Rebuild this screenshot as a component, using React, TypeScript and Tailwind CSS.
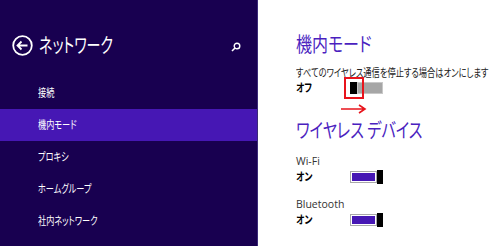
const jp = "font-['Noto_Sans_CJK_JP','Noto_Sans',sans-serif] [font-feature-settings:'palt']"

type ToggleProps = { on: boolean; marked?: boolean }

const Toggle: React.FC<ToggleProps> = ({ on, marked }) => {
  if (on) {
    return (
      <div className="flex h-[14px] w-[33px] items-center">
        <div className="h-[12px] w-[27px] border border-[#a8a8a8] bg-white p-px">
          <div className="h-full w-full bg-[#4617b4]" />
        </div>
        <div className="h-[14px] w-[6px] bg-black" />
      </div>
    )
  }
  return (
    <div className="relative flex h-[12px] w-[33px] items-center">
      <div className="h-[12px] w-[7px] bg-black" />
      <div className="h-[12px] w-[26px] border border-[#c8c8c8] bg-[#a6a6a6]" />
      {marked && (
        <>
          <div className="absolute top-[-5px] left-[-6px] h-[22px] w-[20px] border-2 border-[#e8141c]" />
          <svg
            className="absolute top-[22px] left-[-9px]"
            width="26"
            height="10"
            viewBox="0 0 26 10"
          >
            <path d="M0 5 H24 M18 1 L24 5 L18 9" stroke="#e8141c" strokeWidth="1.6" fill="none" />
          </svg>
        </>
      )}
    </div>
  )
}

type SettingProps = { label: string; state: string; on: boolean; marked?: boolean; jpLabel?: boolean }

const Setting: React.FC<SettingProps> = ({ label, state, on, marked, jpLabel }) => (
  <div className="flex flex-col">
    {jpLabel ? (
      <div
        className={`h-[15px] origin-left scale-x-[0.75] whitespace-nowrap text-[11px] leading-[15px] text-[#222] ${jp}`}
      >
        {label}
      </div>
    ) : (
      <div className="h-[15px] font-['Open_Sans',sans-serif] text-[10.5px] leading-[15px] text-[#333]">
        {label}
      </div>
    )}
    <div className="flex h-[15px] items-center">
      <span className={`inline-block w-[54px] origin-left scale-x-[0.8] text-[11px] font-bold text-black ${jp}`}>
        {state}
      </span>
      <Toggle on={on} marked={marked} />
    </div>
  </div>
)

const App: React.FC = () => {
  const items = ['接続', '機内モード', 'プロキシ', 'ホームグループ', '社内ネットワーク']

  return (
    <div className="flex h-[246px] w-[500px] overflow-hidden bg-white">
      <div className="flex w-[258px] shrink-0 flex-col border-r border-[#3b2a78] bg-[#180050] text-white">
        <div className="flex h-[77px] items-start pt-[33px] pr-[16px] pl-[12px]">
          <svg width="21" height="21" viewBox="0 0 21 21" className="mt-[2px] shrink-0">
            <circle cx="10.5" cy="10.5" r="9.3" stroke="white" strokeWidth="1.8" fill="none" />
            <path d="M5.5 10.5 H15.5 M9.5 6.5 L5.5 10.5 L9.5 14.5" stroke="white" strokeWidth="1.8" fill="none" />
          </svg>
          <span
            className={`ml-[6px] inline-block origin-left scale-x-[0.7] whitespace-nowrap text-[20px] leading-[24px] ${jp}`}
          >
            ネットワーク
          </span>
          <svg width="10" height="10" viewBox="0 0 10 10" className="mt-[9px] ml-auto shrink-0">
            <circle cx="6" cy="4" r="2.8" stroke="white" strokeWidth="1.4" fill="none" />
            <path d="M4 6 L1 9" stroke="white" strokeWidth="1.6" />
          </svg>
        </div>
        {items.map((item) => (
          <div
            key={item}
            className={`flex h-[32px] items-center pl-[38px] ${item === '機内モード' ? 'bg-[#4617b4]' : ''}`}
          >
            <span className={`inline-block origin-left scale-x-[0.71] whitespace-nowrap text-[11.5px] ${jp}`}>
              {item}
            </span>
          </div>
        ))}
      </div>

      <div className="flex flex-col pt-[32px] pl-[38px]">
        <h1
          className={`origin-left scale-x-[0.8] whitespace-nowrap text-[20px] leading-[24px] text-[#4b1fbf] ${jp}`}
        >
          機内モード
        </h1>
        <div className="mt-[9px]">
          <Setting
            label="すべてのワイヤレス通信を停止する場合はオンにします"
            state="オフ"
            on={false}
            marked
            jpLabel
          />
        </div>
        <h2
          className={`mt-[23px] origin-left scale-x-[0.76] whitespace-nowrap text-[20px] leading-[24px] text-[#4b1fbf] ${jp}`}
        >
          ワイヤレス デバイス
        </h2>
        <div className="mt-[12px] flex flex-col gap-[13px]">
          <Setting label="Wi-Fi" state="オン" on />
          <Setting label="Bluetooth" state="オン" on />
        </div>
      </div>
    </div>
  )
}

export default App
